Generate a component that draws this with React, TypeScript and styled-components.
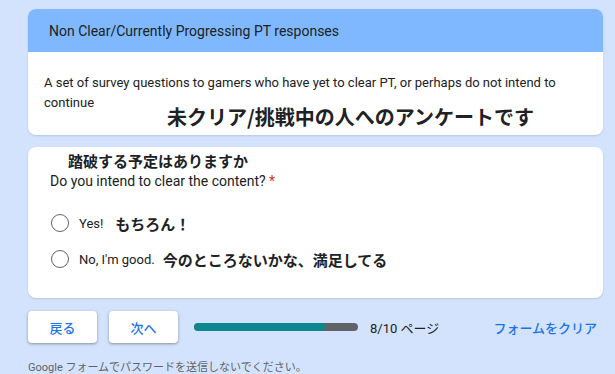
import styled, {createGlobalStyle} from 'styled-components';

const GlobalStyle = createGlobalStyle`
  html, body {
    margin: 0;
    padding: 0;
    background: #d3e3fd;
  }
  body {
    font-family: Roboto, 'Noto Sans CJK JP', sans-serif;
    color: #202124;
  }
`;

const Page = styled.div`
  display: flex;
  flex-direction: column;
  gap: 12px;
  padding: 9px 12px 0 28px;
  width: 575px;
`;

const Card = styled.section`
  background: #fff;
  border-radius: 8px;
  box-shadow: 0 1px 2px rgb(60 64 67 / 18%);
  overflow: hidden;
`;

const CardHeader = styled.div`
  align-items: center;
  background: #7fb8fe;
  display: flex;
  font-size: 14px;
  height: 43px;
  padding-left: 21px;
`;

const Description = styled.p`
  font-size: 13px;
  line-height: 20px;
  margin: 0;
  padding: 21px 16px 0;
`;

const Note = styled.div<{$indent: number}>`
  font-family: 'Noto Sans CJK JP', sans-serif;
  font-size: 20px;
  font-weight: 700;
  line-height: 24px;
  margin-top: -8px;
  padding: 0 0 6px ${({$indent}) => $indent}px;
`;

const QuestionBody = styled.div`
  display: flex;
  flex-direction: column;
  padding: 4px 22px 21px;
`;

const QuestionNote = styled.div`
  font-family: 'Noto Sans CJK JP', sans-serif;
  font-size: 15px;
  font-weight: 700;
  line-height: 20px;
  padding-left: 18px;
`;

const QuestionTitle = styled.div`
  font-size: 14px;
  line-height: 20px;
  margin-bottom: 14px;
`;

const Required = styled.span`
  color: #d93025;
`;

const Option = styled.label`
  align-items: center;
  display: flex;
  height: 36px;
`;

const Radio = styled.span`
  border: 1.5px solid #5f6368;
  border-radius: 50%;
  box-sizing: border-box;
  height: 18px;
  margin-left: 1px;
  margin-right: 10px;
  width: 18px;
`;

const OptionLabel = styled.span<{$gap: number}>`
  font-size: 13px;
  margin-right: ${({$gap}) => $gap}px;
`;

const OptionNote = styled.span`
  font-family: 'Noto Sans CJK JP', sans-serif;
  font-size: 15px;
  font-weight: 700;
`;

const Footer = styled.div`
  align-items: center;
  display: flex;
  margin-top: 1px;
`;

const NavButton = styled.button`
  background: #fff;
  border: none;
  border-radius: 4px;
  box-shadow: 0 1px 2px rgb(60 64 67 / 30%), 0 1px 3px 1px rgb(60 64 67 / 15%);
  color: #1a73e8;
  font-family: 'Noto Sans CJK JP', sans-serif;
  font-size: 13px;
  font-weight: 500;
  height: 32px;
  margin-right: 12px;
  width: 69px;
`;

const Progress = styled.div`
  background: #5f6368;
  border-radius: 4px;
  height: 8px;
  margin: 0 12px 0 4px;
  overflow: hidden;
  width: 164px;
`;

const ProgressFill = styled.div`
  background: #0b878f;
  border-radius: 4px;
  height: 100%;
`;

const PageCount = styled.span`
  font-size: 13px;
`;

const ClearLink = styled.span`
  color: #1a73e8;
  font-size: 13px;
  font-weight: 500;
  margin-left: auto;
  margin-right: 6px;
`;

const Disclaimer = styled.div`
  color: #5f6368;
  font-size: 11px;
  margin-top: 15px;
`;

const options = [
  {label: 'Yes!', note: 'もちろん！', gap: 12},
  {label: "No, I'm good.", note: '今のところないかな、満足してる', gap: 8},
];

export default function App() {
  const current = 8;
  const total = 10;

  return (
    <>
      <GlobalStyle />
      <Page>
        <Card>
          <CardHeader>Non Clear/Currently Progressing PT responses</CardHeader>
          <Description>
            A set of survey questions to gamers who have yet to clear PT, or perhaps do not intend to continue
          </Description>
          <Note $indent={139}>未クリア/挑戦中の人へのアンケートです</Note>
        </Card>
        <Card>
          <QuestionBody>
            <QuestionNote>踏破する予定はありますか</QuestionNote>
            <QuestionTitle>
              Do you intend to clear the content? <Required>*</Required>
            </QuestionTitle>
            {options.map((option) => (
              <Option key={option.label}>
                <Radio />
                <OptionLabel $gap={option.gap}>{option.label}</OptionLabel>
                <OptionNote>{option.note}</OptionNote>
              </Option>
            ))}
          </QuestionBody>
        </Card>
        <div>
          <Footer>
            <NavButton>戻る</NavButton>
            <NavButton>次へ</NavButton>
            <Progress>
              <ProgressFill style={{width: `${(current / total) * 100}%`}} />
            </Progress>
            <PageCount>
              {current}/{total} ページ
            </PageCount>
            <ClearLink>フォームをクリア</ClearLink>
          </Footer>
          <Disclaimer>Google フォームでパスワードを送信しないでください。</Disclaimer>
        </div>
      </Page>
    </>
  );
}
